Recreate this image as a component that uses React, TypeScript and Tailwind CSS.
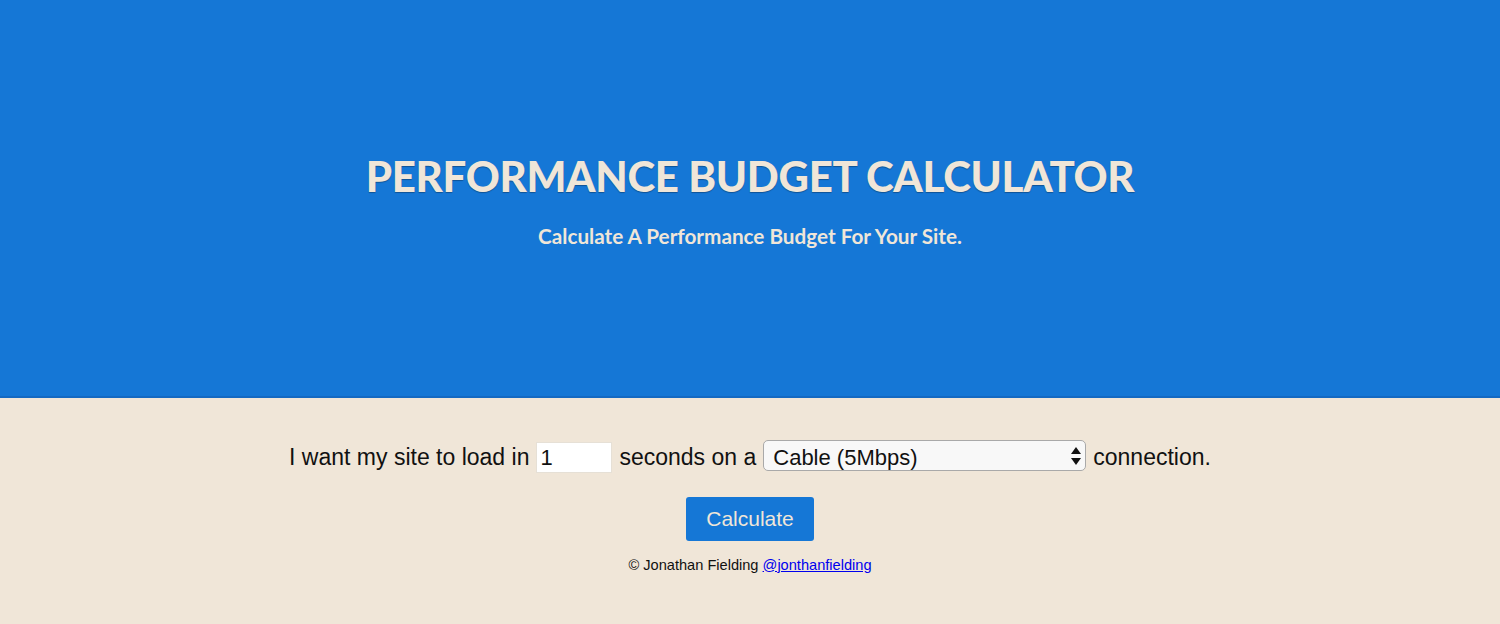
import { useState } from "react";

const App = () => {
  const [seconds, setSeconds] = useState("1");
  const [speed, setSpeed] = useState("cable");

  return (
    <div className="min-h-screen bg-[#f0e6d8] font-['Liberation_Sans',Arial,sans-serif] text-[#111]">
      {/* Hero */}
      <header className="h-[398px] bg-[#1577d6] border-b-2 border-[#1469c2] flex flex-col items-center justify-center pt-[6px] font-['Lato',sans-serif] text-[#f0e6d8]">
        <h1 className="text-[42px] leading-none font-black tracking-[-0.3px] [text-shadow:0_1px_1px_rgba(0,0,0,0.3)]">
          PERFORMANCE BUDGET CALCULATOR
        </h1>
        <p className="mt-[29px] text-[20.7px] font-bold leading-none">
          Calculate A Performance Budget For Your Site.
        </p>
      </header>

      {/* Form */}
      <main className="flex flex-col items-center pt-[42px]">
        <div className="flex items-center gap-[7px] text-[23px]">
          <span>I want my site to load in</span>
          <input
            type="text"
            value={seconds}
            onChange={(e) => setSeconds(e.target.value)}
            className="w-[76px] h-[31px] bg-white border border-[#e6e0d6] px-[3px] text-[22px] outline-none"
          />
          <span>seconds on a</span>
          <div className="relative">
            <select
              value={speed}
              onChange={(e) => setSpeed(e.target.value)}
              className="appearance-none w-[323px] h-[31px] rounded-[5px] border border-[#a9a9a9] bg-[#f8f8f8] pl-[9px] text-[22px] outline-none"
            >
              <option value="cable">Cable (5Mbps)</option>
              <option value="dsl">DSL (2Mbps)</option>
              <option value="3g">3G (1.6Mbps)</option>
            </select>
            <svg
              className="absolute right-[5px] top-[7px] pointer-events-none"
              width="10"
              height="18"
              viewBox="0 0 10 18"
            >
              <path d="M5 0 L10 7 L0 7 Z" fill="#111" />
              <path d="M0 11 L10 11 L5 18 Z" fill="#111" />
            </svg>
          </div>
          <span>connection.</span>
        </div>

        <button className="mt-[22px] w-[128px] h-[44px] rounded-[3px] bg-[#1577d6] text-[#f0e6d8] text-[21px]">
          Calculate
        </button>

        <p className="mt-[14px] text-[14.6px]">
          © Jonathan Fielding{" "}
          <a href="#" className="text-[#0000ee] underline">
            @jonthanfielding
          </a>
        </p>
      </main>
    </div>
  );
};

export default App;
